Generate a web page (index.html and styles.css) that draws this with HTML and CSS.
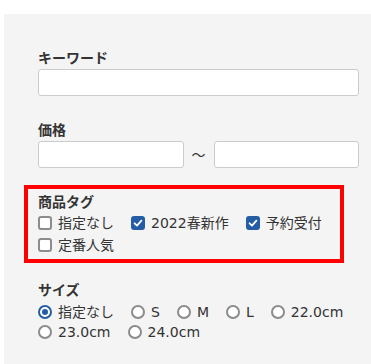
FILE: index.html
```html
<!DOCTYPE html>
<html lang="ja">
<head>
<meta charset="utf-8">
<link rel="stylesheet" href="styles.css">
</head>
<body>
<div class="panel">
  <div class="field">
    <div class="field-label">キーワード</div>
    <div class="text-input full"></div>
  </div>
  <div class="field price">
    <div class="field-label">価格</div>
    <div class="range">
      <div class="text-input"></div>
      <span class="tilde">〜</span>
      <div class="text-input"></div>
    </div>
  </div>
  <div class="tags">
    <div class="field-label">商品タグ</div>
    <div class="options check-rows">
      <span class="opt"><span class="box"></span>指定なし</span>
      <span class="opt"><span class="box on"><svg viewBox="0 0 14 14" width="14" height="14"><path d="M3.6 7.3 L6 9.6 L10.4 4.7" fill="none" stroke="#fff" stroke-width="1.8" stroke-linecap="round" stroke-linejoin="round"/></svg></span>2022春新作</span>
      <span class="opt"><span class="box on"><svg viewBox="0 0 14 14" width="14" height="14"><path d="M3.6 7.3 L6 9.6 L10.4 4.7" fill="none" stroke="#fff" stroke-width="1.8" stroke-linecap="round" stroke-linejoin="round"/></svg></span>予約受付</span>
      <span class="opt"><span class="box"></span>定番人気</span>
    </div>
  </div>
  <div class="field size">
    <div class="field-label size-label">サイズ</div>
    <div class="options radio-rows">
      <span class="opt"><span class="radio on"></span>指定なし</span>
      <span class="opt"><span class="radio"></span>S</span>
      <span class="opt"><span class="radio"></span>M</span>
      <span class="opt"><span class="radio"></span>L</span>
      <span class="opt"><span class="radio"></span>22.0cm</span>
      <span class="opt"><span class="radio"></span>23.0cm</span>
      <span class="opt"><span class="radio"></span>24.0cm</span>
    </div>
  </div>
</div>
</body>
</html>
```

FILE: styles.css
```css
html, body {
  margin: 0;
  padding: 0;
  background: #ffffff;
}
body {
  font-family: "DejaVu Sans", "Noto Sans CJK JP", sans-serif;
  color: #333333;
  font-size: 14px;
}
.panel {
  margin: 14px 0 0 4px;
  background: #f4f4f4;
  padding: 34px 12px 20px 34px;
  min-height: 350px;
  box-sizing: border-box;
}
.field-label {
  font-weight: bold;
  font-size: 14px;
  line-height: 20px;
  color: #333333;
}
.text-input {
  margin-top: 1px;
  height: 27px;
  box-sizing: border-box;
  background: #ffffff;
  border: 1px solid #cccccc;
  border-radius: 3px;
}
.price {
  margin-top: 24px;
}
.range {
  display: flex;
  align-items: center;
}
.range .text-input {
  flex: 1;
}
.tilde {
  width: 30px;
  text-align: center;
  font-size: 14px;
  line-height: 20px;
  margin-top: 1px;
}
.tags {
  margin: 17px 0 0 -14px;
  width: 320px;
  box-sizing: border-box;
  border: 4px solid #ff0000;
  padding: 3px 4px 3px 10px;
}
.options {
  display: flex;
  flex-wrap: wrap;
  column-gap: 17px;
}
.check-rows .opt {
  line-height: 22px;
}
.radio-rows .opt {
  line-height: 20px;
}
.opt {
  display: inline-flex;
  align-items: center;
  font-size: 14px;
  color: #333333;
  white-space: nowrap;
}
.box {
  width: 14px;
  height: 14px;
  box-sizing: border-box;
  border: 2px solid #8c8c8c;
  border-radius: 3px;
  background: #ffffff;
  margin-right: 6px;
  display: inline-flex;
}
.box.on {
  border: none;
  background: #245da4;
}
.box svg {
  display: block;
}
.size {
  margin-top: 17px;
}
.size-label {
  margin-bottom: 2px;
}
.radio {
  width: 14px;
  height: 14px;
  box-sizing: border-box;
  border: 2px solid #8c8c8c;
  border-radius: 50%;
  background: #ffffff;
  margin-right: 6px;
  display: inline-flex;
  align-items: center;
  justify-content: center;
}
.radio.on {
  border-color: #245da4;
}
.radio.on::after {
  content: "";
  width: 6px;
  height: 6px;
  border-radius: 50%;
  background: #245da4;
}
```
